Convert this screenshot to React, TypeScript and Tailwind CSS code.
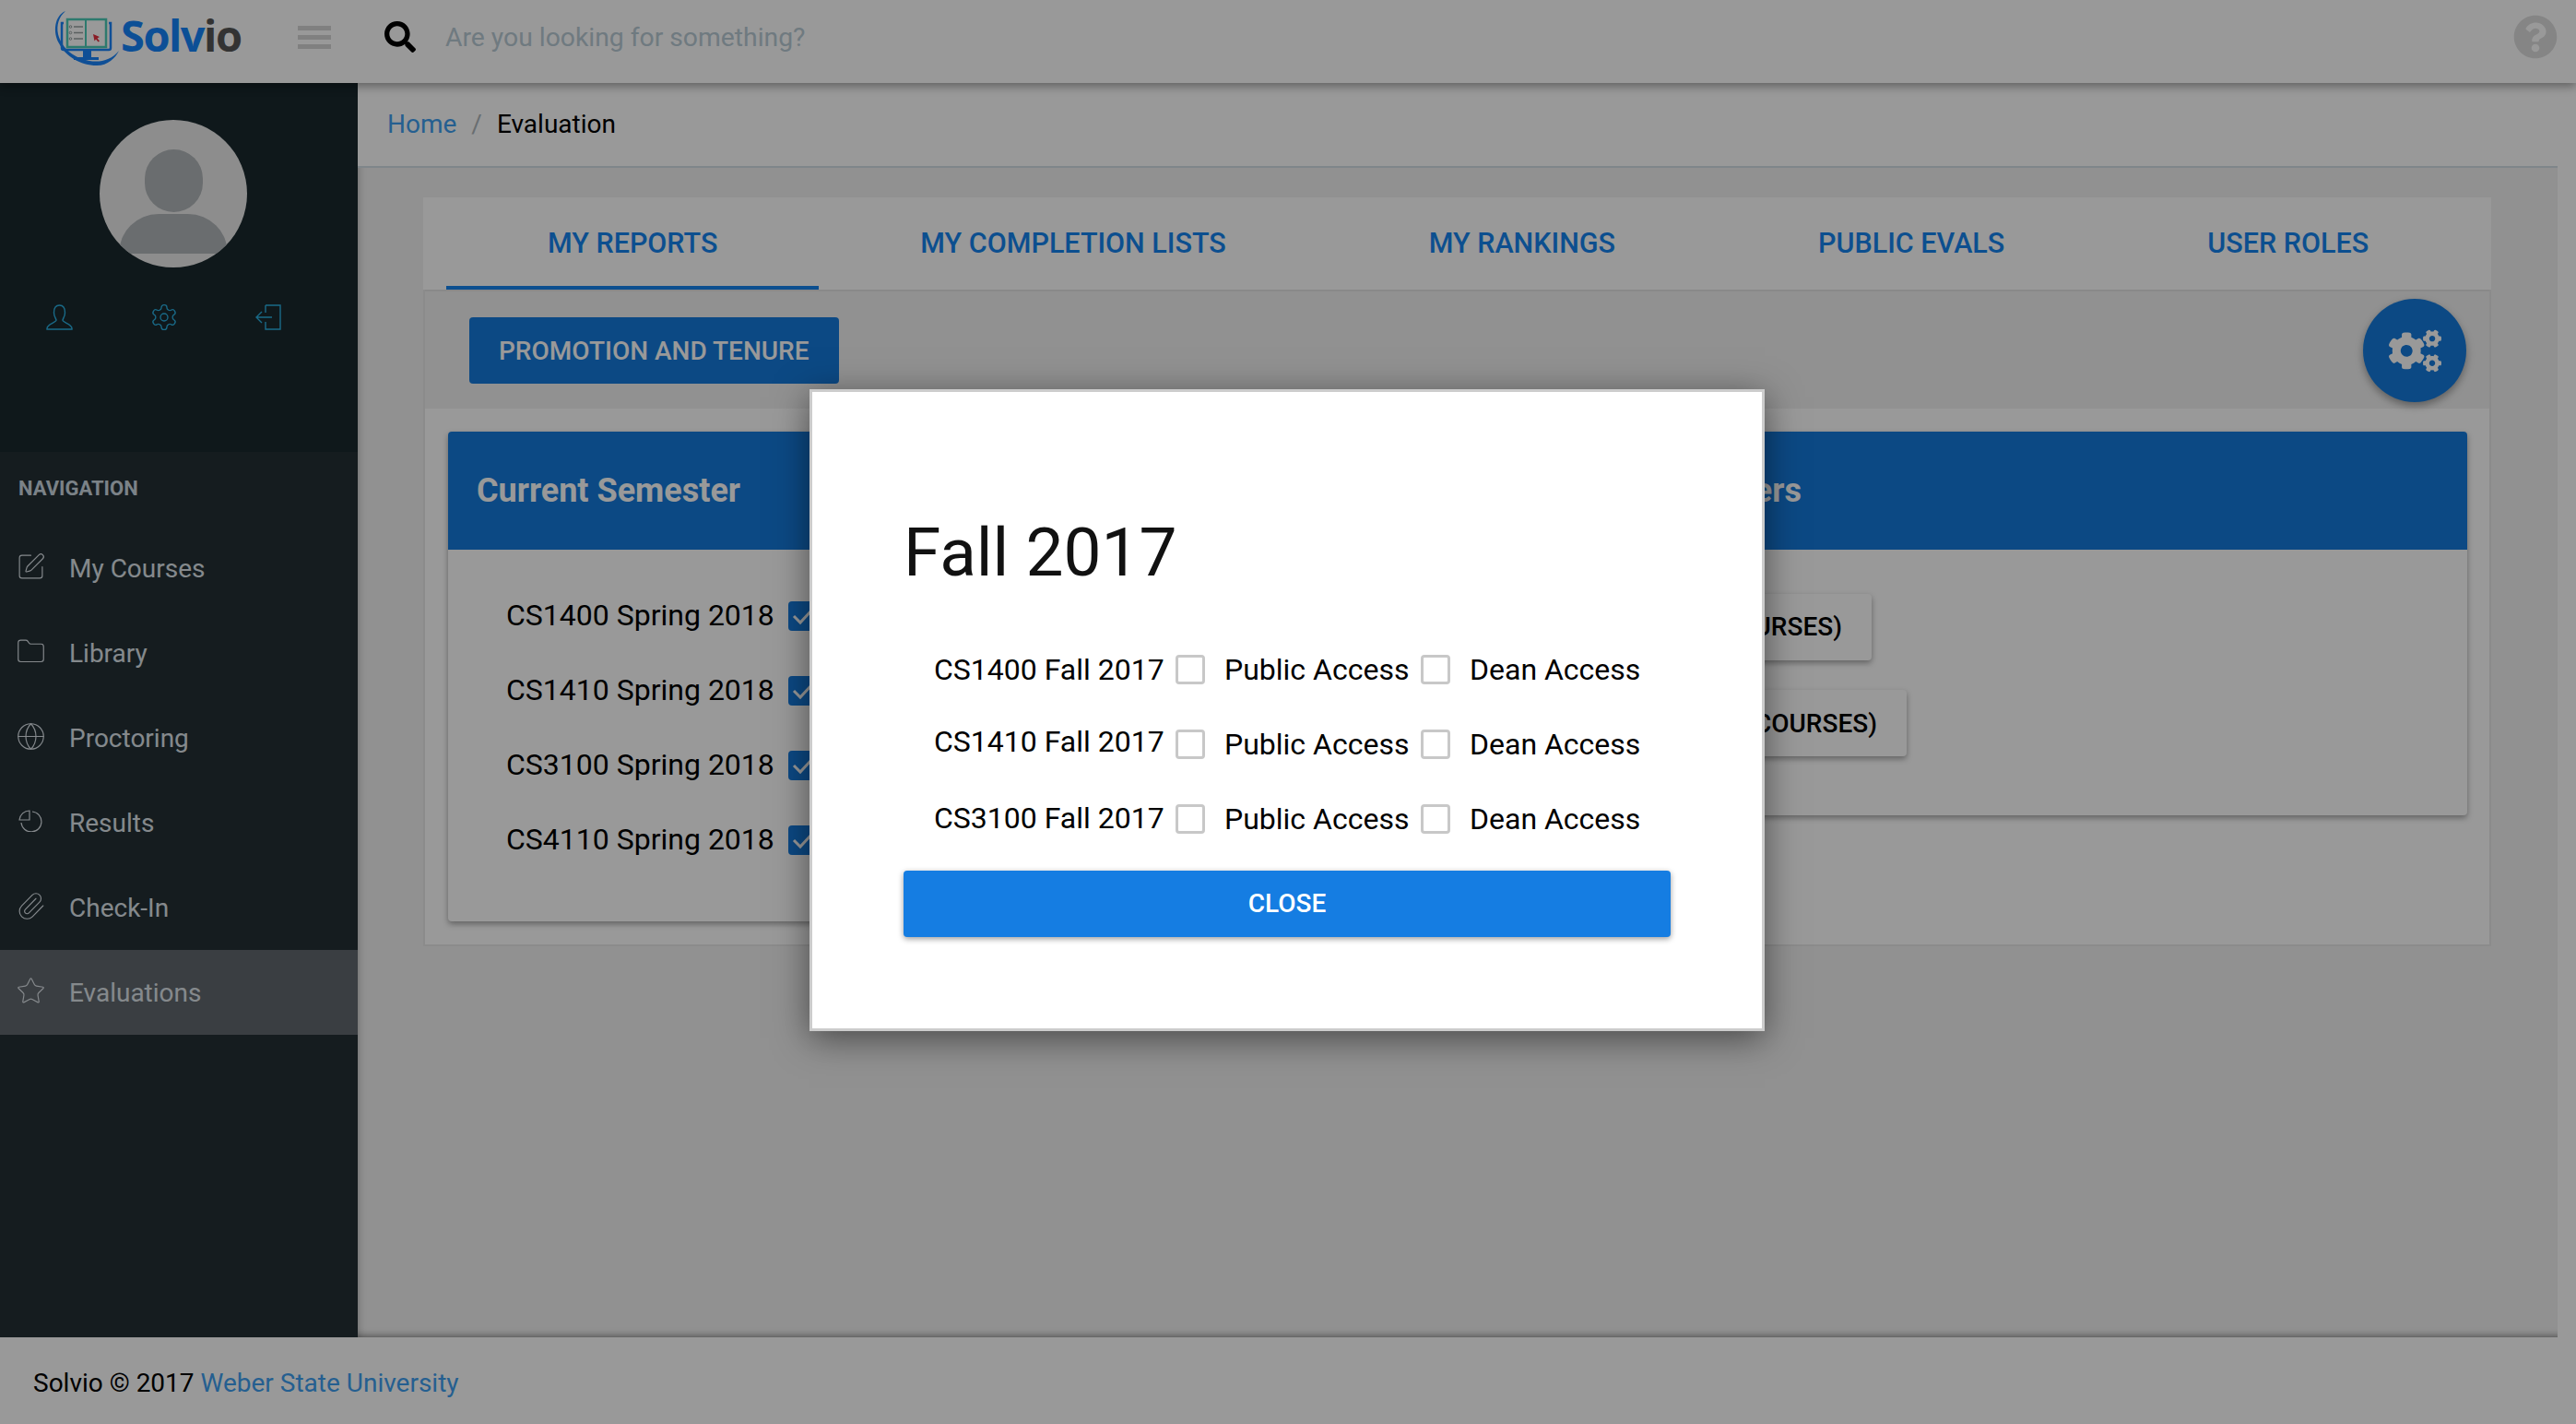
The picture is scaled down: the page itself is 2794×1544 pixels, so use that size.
import React from "react";
import { FaCogs, FaQuestionCircle, FaSearch } from "react-icons/fa";
import { SquarePen, Folder, Globe, Paperclip, Star } from "lucide-react";

const PieIcon = () => (
  <svg width="28" height="24" viewBox="0 0 28 24" fill="none" stroke="currentColor" strokeWidth="1.2">
    <path d="M12 1 A11 11 0 0 0 1 11 H12 Z" />
    <path d="M15 2 A11 11 0 1 1 3 14" />
  </svg>
);

const nav = [
  { label: "My Courses", icon: <SquarePen size={33} strokeWidth={0.85} className="-ml-[3px]" /> },
  { label: "Library", icon: <Folder size={33} strokeWidth={0.85} className="-ml-[3px]" /> },
  { label: "Proctoring", icon: <Globe size={33} strokeWidth={0.85} className="-ml-[3px]" /> },
  { label: "Results", icon: <PieIcon /> },
  { label: "Check-In", icon: <Paperclip size={33} strokeWidth={0.85} className="-ml-[3px]" /> },
  { label: "Evaluations", icon: <Star size={33} strokeWidth={0.85} className="-ml-[3px]" />, active: true },
];

const Logo = () => (
  <svg width="76" height="66" viewBox="0 0 76 66" fill="none" className="shrink-0">
    <path d="M14 5 C2 10 0 28 7 40 C14 54 30 64 48 64 C60 64 68 56 72 48 C64 58 52 61 40 59 C24 56 10 46 6 30 C4 20 7 11 14 5 Z" fill="#1984fa" />
    <path d="M12 18 H10 V45 a2 2 0 0 0 2 2 H61 a2 2 0 0 0 2 -2 V18 H61" stroke="#1984fa" strokeWidth="2.5" />
    <rect x="33" y="47" width="9" height="8" fill="#1984fa" />
    <rect x="23" y="55" width="27" height="3" fill="#1984fa" />
    <rect x="16" y="14" width="42" height="30" fill="#ffffff" stroke="#4bcbb8" strokeWidth="2.5" />
    <path d="M36 14 V44" stroke="#4bcbb8" strokeWidth="2" />
    <path d="M23 22 H33 M23 28.5 H33 M23 35 H33" stroke="#96a0a0" strokeWidth="1.5" />
    <circle cx="19.5" cy="22" r="1.3" stroke="#96a0a0" />
    <circle cx="19.5" cy="28.5" r="1.3" stroke="#96a0a0" />
    <circle cx="19.5" cy="35" r="1.3" stroke="#96a0a0" />
    <path d="M44 30 L51 33 L48.5 34.5 L51 37.5 L49.5 38.5 L47 35.5 L45.5 37.5 Z" fill="#e62f3e" />
  </svg>
);

const Check = ({ checked }: { checked?: boolean }) =>
  checked ? (
    <span className="flex h-8 w-8 shrink-0 items-center justify-center rounded bg-[#157bdd]">
      <svg width="24" height="20" viewBox="0 0 24 20" fill="none" stroke="#fff" strokeWidth="3">
        <path d="M2 10 L9 17 L22 3" />
      </svg>
    </span>
  ) : (
    <span className="block h-8 w-8 shrink-0 rounded border-[3px] border-[#c8c8c8] bg-white" />
  );

const tabs = ["MY REPORTS", "MY COMPLETION LISTS", "MY RANKINGS", "PUBLIC EVALS", "USER ROLES"];
const current = ["CS1400 Spring 2018", "CS1410 Spring 2018", "CS3100 Spring 2018", "CS4110 Spring 2018"];
const rows = [
  { name: "CS1400 Fall 2017", shift: "" },
  { name: "CS1410 Fall 2017", shift: "-translate-y-[3px]" },
  { name: "CS3100 Fall 2017", shift: "-translate-y-px" },
];

export default function App() {
  return (
    <div className="relative flex h-[1544px] w-[2794px] flex-col overflow-hidden bg-white font-['Roboto',sans-serif] text-[28px] text-black">
      <header className="relative z-20 flex h-[90px] shrink-0 items-center bg-white pb-[10px] pr-5 shadow-[0_3px_10px_rgba(0,0,0,0.4)]">
        <div className="ml-[57px] flex w-[266px] items-center">
          <Logo />
          <span className="-ml-[2px] -translate-y-[2px] font-['Open_Sans',sans-serif] text-[47px] font-bold leading-none tracking-[-1.5px] text-[#1584fa]">
            Solv<span className="text-[#555555]">io</span>
          </span>
        </div>
        <div className="flex w-9 flex-col gap-[5px]">
          <span className="h-[5px] bg-[#d6d6d6]" />
          <span className="h-[5px] bg-[#d6d6d6]" />
          <span className="h-[5px] bg-[#d6d6d6]" />
        </div>
        <FaSearch className="ml-[58px] text-[34px] text-black" />
        <span className="ml-8 translate-y-px text-[28.3px] text-[#b9cbd5]">Are you looking for something?</span>
        <FaQuestionCircle className="ml-auto text-[48px] text-[#dedede]" />
      </header>

      <div className="flex min-h-0 flex-1">
        <aside className="flex w-[388px] shrink-0 flex-col bg-[#233035]">
          <div className="h-[400px] bg-[#19282d] pt-10">
            <div className="relative ml-[108px] h-40 w-40 overflow-hidden rounded-full bg-[#ececec]">
              <span className="absolute left-[49px] top-8 h-[68px] w-[63px] rounded-full bg-[#b1b6b9]" />
              <span className="absolute left-[21px] top-[102px] h-[43px] w-[118px] rounded-t-full bg-[#b1b6b9]" />
            </div>
            <div className="mt-10 flex items-center gap-[83px] pl-[50px] text-[#2bb1e3]">
              <svg width="29" height="28" viewBox="0 0 29 28" fill="none" stroke="currentColor" strokeWidth="1.4">
                <path d="M14.5 1 C10 1 8.5 5 8.5 9 C8.5 13 10.5 15 11 17 C11 20 1 21 1 26 V27 H28 V26 C28 21 18 20 18 17 C18.5 15 20.5 13 20.5 9 C20.5 5 19 1 14.5 1 Z" />
              </svg>
              <svg width="32" height="32" viewBox="0 0 24 24" fill="none" stroke="currentColor" strokeWidth="1" className="-my-[2px]">
                <path d="M12.22 2h-.44a2 2 0 0 0-2 2v.18a2 2 0 0 1-1 1.73l-.43.25a2 2 0 0 1-2 0l-.15-.08a2 2 0 0 0-2.73.73l-.22.38a2 2 0 0 0 .73 2.73l.15.1a2 2 0 0 1 1 1.72v.51a2 2 0 0 1-1 1.74l-.15.09a2 2 0 0 0-.73 2.73l.22.38a2 2 0 0 0 2.73.73l.15-.08a2 2 0 0 1 2 0l.43.25a2 2 0 0 1 1 1.73V20a2 2 0 0 0 2 2h.44a2 2 0 0 0 2-2v-.18a2 2 0 0 1 1-1.73l.43-.25a2 2 0 0 1 2 0l.15.08a2 2 0 0 0 2.73-.73l.22-.39a2 2 0 0 0-.73-2.73l-.15-.08a2 2 0 0 1-1-1.74v-.5a2 2 0 0 1 1-1.74l.15-.09a2 2 0 0 0 .73-2.73l-.22-.38a2 2 0 0 0-2.73-.73l-.15.08a2 2 0 0 1-2 0l-.43-.25a2 2 0 0 1-1-1.73V4a2 2 0 0 0-2-2z" />
                <circle cx="12" cy="12" r="3" />
              </svg>
              <svg width="28" height="28" viewBox="0 0 28 28" fill="none" stroke="currentColor" strokeWidth="1.4">
                <path d="M11 1 H27 V27 H11 V19 M11 9 V1" />
                <path d="M18 14 H1 M7 8 L1 14 L7 20" />
              </svg>
            </div>
          </div>
          <div className="flex h-20 items-center pb-[2px] pl-5 text-[22px] font-bold text-[#cdd9e1]">NAVIGATION</div>
          {nav.map((n) => (
            <div
              key={n.label}
              className={`flex h-[92px] items-center pl-5 text-[#dee4ea] ${n.active ? "bg-[#61686e]" : ""}`}
            >
              <span className="flex w-[55px] -translate-y-[2px] items-center">{n.icon}</span>
              <span className="translate-y-px">{n.label}</span>
            </div>
          ))}
        </aside>

        <main className="relative mr-5 flex min-w-0 flex-1 flex-col bg-[#f2f2f2] shadow-[inset_10px_0_10px_-10px_rgba(0,0,0,0.3),inset_0_-10px_10px_-10px_rgba(0,0,0,0.6)]">
          <div className="flex h-[92px] shrink-0 items-center gap-4 border-b-2 border-[#d4e0e6] bg-white pl-[32px]">
            <span className="text-[#3f9ff0]">Home</span>
            <span className="text-[#b0b8bc]">/</span>
            <span>Evaluation</span>
          </div>
          <div className="ml-[71px] mr-[72px] mt-8">
            <div className="flex h-[100px] items-stretch bg-white pl-[25px]">
              {tabs.map((t, i) => (
                <div
                  key={t}
                  className={`flex items-center px-[110px] text-[30.5px] font-medium text-[#1584ee] ${i === 0 ? "border-b-4 border-[#1584ee] pt-1" : ""}`}
                >
                  {t}
                </div>
              ))}
            </div>
            <div className="border-x-2 border-b-2 border-[#e8e8e8]">
              <div className="flex h-[129px] items-start justify-between border-t-2 border-[#e4e4e4] pl-[48px] pr-[25px] pt-[28px]">
                <button className="flex h-[72px] items-center rounded bg-[#157bdd] px-8 pt-px font-medium text-white">
                  PROMOTION AND TENURE
                </button>
                <div className="-mt-5 flex h-[112px] w-[112px] items-center justify-center rounded-full bg-[#157bdd] shadow-[0_4px_8px_rgba(0,0,0,0.35)]">
                  <FaCogs className="text-[57px] text-white" />
                </div>
              </div>
              <div className="grid grid-cols-2 items-start gap-12 bg-white pb-[25px] pl-[25px] pr-6 pt-[25px]">
                <section className="rounded shadow-[0_3px_6px_rgba(0,0,0,0.35)]">
                  <h2 className="flex h-[128px] items-center rounded-t bg-[#157bdd] pl-[31px] text-[36px] font-bold text-white">
                    Current Semester
                  </h2>
                  <div className="pb-12 pl-[63px] pt-[31px]">
                    {current.map((c) => (
                      <div key={c} className="flex h-[81px] items-center gap-[15px] text-[32px]">
                        <span className="-translate-y-px">{c}</span>
                        <Check checked />
                      </div>
                    ))}
                  </div>
                </section>
                <section className="rounded shadow-[0_3px_6px_rgba(0,0,0,0.35)]">
                  <h2 className="flex h-[128px] items-center rounded-t bg-[#157bdd] pl-6 text-[36px] font-bold text-white">
                    Previous Semesters
                  </h2>
                  <div className="flex flex-col items-start gap-8 pb-16 pl-8 pt-12">
                    <button className="flex h-[72px] w-[393px] items-center justify-end rounded bg-white px-8 font-medium shadow-[0_3px_6px_rgba(0,0,0,0.35)]">
                      FALL 2017 (3 COURSES)
                    </button>
                    <button className="flex h-[72px] w-[431px] items-center justify-end rounded bg-white px-8 pt-[2px] font-medium shadow-[0_3px_6px_rgba(0,0,0,0.35)]">
                      SPRING 2017 (4 COURSES)
                    </button>
                  </div>
                </section>
              </div>
            </div>
          </div>
        </main>
      </div>

      <footer className="relative z-10 mr-5 flex h-[94px] shrink-0 items-center bg-white pl-9 pt-[6px]">
        <span>Solvio © 2017&nbsp;</span>
        <span className="text-[#3f9ff0]">Weber State University</span>
      </footer>

      <div className="absolute inset-0 z-30 bg-black/40" />

      <div className="absolute left-[878px] top-[422px] z-40 h-[696px] w-[1036px] border-[3px] border-[#cccccc] bg-white pl-[99px] pr-[99px] pt-[132px] shadow-[0_8px_36px_rgba(0,0,0,0.5)]">
        <h1 className="h-[128px] text-[73px] leading-[84px] text-[#111111]">Fall 2017</h1>
        <div className="pl-[33px]">
          {rows.map((r) => (
            <div key={r.name} className="flex h-[81px] items-center text-[32px]">
              <span className={`w-[262px] ${r.shift}`}>{r.name}</span>
              <Check />
              <span className="ml-[21px] w-[213px]">Public Access</span>
              <Check />
              <span className="ml-[21px]">Dean Access</span>
            </div>
          ))}
        </div>
        <button className="mt-4 flex h-[72px] w-[832px] items-center justify-center rounded bg-[#157de2] font-medium text-white shadow-[0_2px_6px_rgba(0,0,0,0.4)]">
          CLOSE
        </button>
      </div>
    </div>
  );
}
